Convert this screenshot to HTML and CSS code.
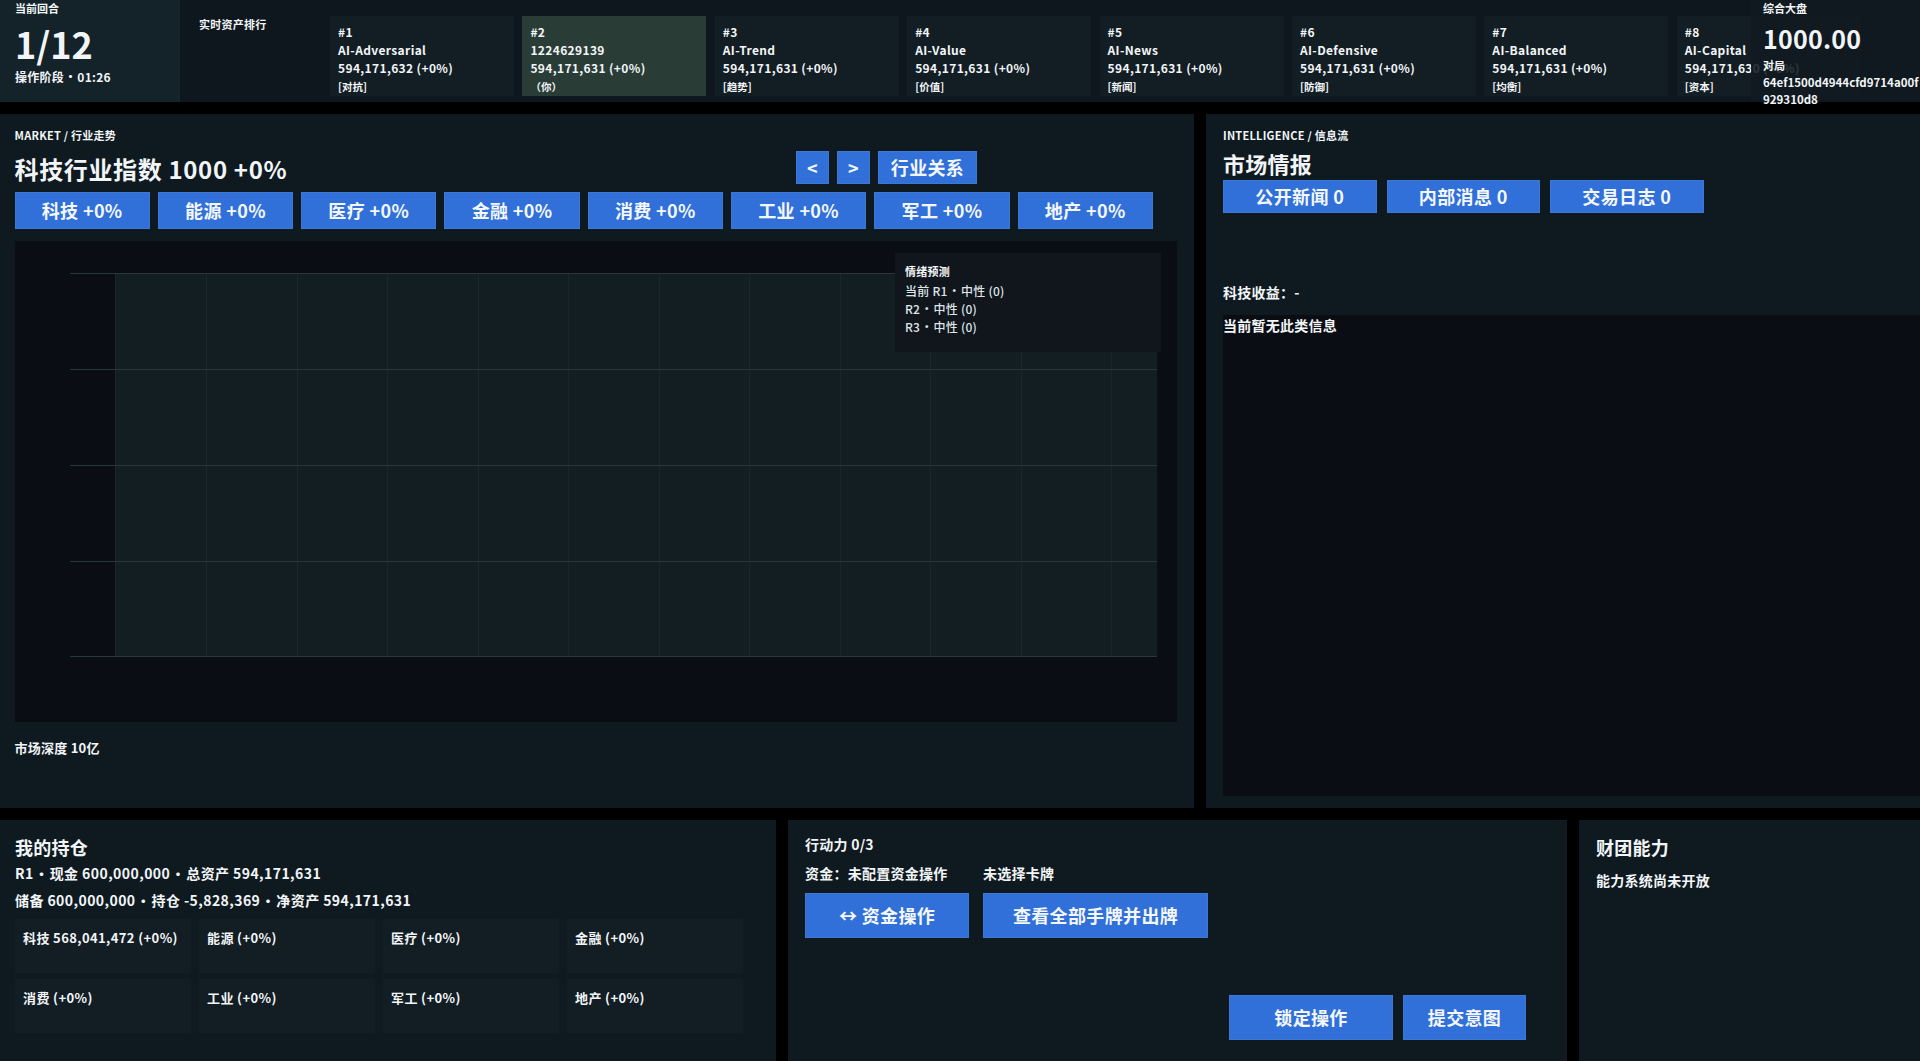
FILE: index.html
```html
<!DOCTYPE html>
<html lang="zh-CN">
<head>
<meta charset="utf-8">
<title>市场</title>
<link rel="stylesheet" href="styles.css">
</head>
<body>
<div class="app">
  <header class="topbar">
    <div class="round">
      <div class="label">当前回合</div>
      <div class="round-num">1/12</div>
      <div class="phase">操作阶段 <span class="dot">·</span> 01:26</div>
    </div>
    <div class="rank">
      <div class="rank-title">实时资产排行</div>
      <div class="rank-cards">
        <div class="card"><div>#1</div><div>AI-Adversarial</div><div>594,171,632 (+0%)</div><div class="tag">[对抗]</div></div>
        <div class="card me"><div>#2</div><div>1224629139</div><div>594,171,631 (+0%)</div><div class="tag">（你）</div></div>
        <div class="card"><div>#3</div><div>AI-Trend</div><div>594,171,631 (+0%)</div><div class="tag">[趋势]</div></div>
        <div class="card"><div>#4</div><div>AI-Value</div><div>594,171,631 (+0%)</div><div class="tag">[价值]</div></div>
        <div class="card"><div>#5</div><div>AI-News</div><div>594,171,631 (+0%)</div><div class="tag">[新闻]</div></div>
        <div class="card"><div>#6</div><div>AI-Defensive</div><div>594,171,631 (+0%)</div><div class="tag">[防御]</div></div>
        <div class="card"><div>#7</div><div>AI-Balanced</div><div>594,171,631 (+0%)</div><div class="tag">[均衡]</div></div>
        <div class="card"><div>#8</div><div>AI-Capital</div><div>594,171,630 (+0%)</div><div class="tag">[资本]</div></div>
      </div>
    </div>
    <div class="index">
      <div class="label">综合大盘</div>
      <div class="index-num">1000.00</div>
      <div class="match-label">对局</div>
      <div class="match">64ef1500d4944cfd9714a00f929310d8</div>
    </div>
  </header>

  <main class="middle">
    <section class="panel market">
      <div class="eyebrow">MARKET / 行业走势</div>
      <div class="market-head">
        <h2 class="market-title">科技行业指数 1000 +0%</h2>
        <div class="market-nav">
          <button class="btn nav">&lt;</button>
          <button class="btn nav">&gt;</button>
          <button class="btn rel">行业关系</button>
        </div>
      </div>
      <div class="sectors">
        <button class="btn sector">科技 +0%</button>
        <button class="btn sector">能源 +0%</button>
        <button class="btn sector">医疗 +0%</button>
        <button class="btn sector">金融 +0%</button>
        <button class="btn sector">消费 +0%</button>
        <button class="btn sector">工业 +0%</button>
        <button class="btn sector">军工 +0%</button>
        <button class="btn sector">地产 +0%</button>
      </div>
      <div class="chart">
        <svg class="chart-svg" width="1162" height="481" viewBox="0 0 1162 481">
          <rect x="100" y="32" width="1042" height="384" fill="#131e23"/>
          <g stroke="#1a262b" stroke-width="1">
            <path d="M100.500 32V416M191.500 32V416M282.500 32V416M372.500 32V416M463.500 32V416M553.500 32V416M644.500 32V416M734.500 32V416M825.500 32V416M915.500 32V416M1006.500 32V416M1096.500 32V416"/>
          </g>
          <g stroke="#2a363b" stroke-width="1">
            <path d="M55 32.500H1142M55 128.500H1142M55 224.500H1142M55 320.500H1142M55 415.500H1142"/>
          </g>
        </svg>
        <div class="forecast">
          <div class="forecast-title">情绪预测</div>
          <div>当前 R1 <span class="dot">·</span> 中性 (0)</div>
          <div>R2 <span class="dot">·</span> 中性 (0)</div>
          <div>R3 <span class="dot">·</span> 中性 (0)</div>
        </div>
      </div>
      <div class="depth">市场深度 10亿</div>
    </section>

    <section class="panel intel">
      <div class="eyebrow">INTELLIGENCE / 信息流</div>
      <h2 class="intel-title">市场情报</h2>
      <div class="tabs">
        <button class="btn tab">公开新闻 0</button>
        <button class="btn tab">内部消息 0</button>
        <button class="btn tab">交易日志 0</button>
      </div>
      <div class="yield">科技收益：-</div>
      <div class="feed">当前暂无此类信息</div>
    </section>
  </main>

  <footer class="bottom">
    <section class="panel holdings">
      <h3 class="panel-title">我的持仓</h3>
      <div class="stat">R1 <span class="dot">·</span> 现金 600,000,000 <span class="dot">·</span> 总资产 594,171,631</div>
      <div class="stat">储备 600,000,000 <span class="dot">·</span> 持仓 -5,828,369 <span class="dot">·</span> 净资产 594,171,631</div>
      <div class="hold-grid">
        <div class="hold">科技 568,041,472 (+0%)</div>
        <div class="hold">能源 (+0%)</div>
        <div class="hold">医疗 (+0%)</div>
        <div class="hold">金融 (+0%)</div>
        <div class="hold">消费 (+0%)</div>
        <div class="hold">工业 (+0%)</div>
        <div class="hold">军工 (+0%)</div>
        <div class="hold">地产 (+0%)</div>
      </div>
    </section>
    <section class="panel actions">
      <div class="ap">行动力 0/3</div>
      <div class="choice"><span class="choice-fund">资金：未配置资金操作</span><span>未选择卡牌</span></div>
      <div class="act-row">
        <button class="btn act fund">↔ 资金操作</button>
        <button class="btn act cards">查看全部手牌并出牌</button>
      </div>
      <div class="submit-row">
        <button class="btn act fund">锁定操作</button>
        <button class="btn act submit">提交意图</button>
      </div>
    </section>
    <section class="panel power">
      <h3 class="panel-title">财团能力</h3>
      <div class="power-note">能力系统尚未开放</div>
    </section>
  </footer>
</div>
</body>
</html>
```

FILE: styles.css
```css
* { box-sizing: border-box; }
html, body { margin: 0; padding: 0; height: 100%; background: #000; overflow: hidden; }
body {
  font-family: "Noto Sans CJK SC", "Noto Sans", sans-serif;
  font-weight: 700;
  color: #f2f5f7;
  font-size: 12px;
  letter-spacing: 0.02em;
}
.dot { margin: 0 -0.2em; }
.app { width: 1920px; height: 1061px; display: flex; flex-direction: column; gap: 12px; }

.topbar { height: 102px; flex: none; display: flex; background: #0e171e; position: relative; overflow: visible; }
.round { width: 180px; flex: none; padding: 0 15px; background: #14222a; border-right: 1px solid #18252c; }
.label { font-size: 11px; line-height: 16px; letter-spacing: 0; }
.phase { font-size: 12px; line-height: 18px; }
.round-num { font-size: 36px; line-height: 42px; margin-top: 6px; margin-bottom: 4px; letter-spacing: 0; }

.rank { flex: 1; min-width: 0; display: flex; padding: 16px 0 0 19px; overflow: hidden; }
.rank-title { width: 131px; flex: none; font-size: 11px; line-height: 16px; }
.rank-cards { display: flex; gap: 8.400px; }
.card { width: 184px; height: 80px; flex: none; background: #131d24; padding: 6.500px 8px 0; font-size: 12px; line-height: 18.400px; letter-spacing: 0.03em; }
.card.me { background: #2a3c36; }
.tag { font-size: 10.500px; line-height: 18px; letter-spacing: 0; }

.index { position: absolute; right: 0; top: 0; width: 169px; height: 102px; padding: 0 0 0 12px; background: rgba(16, 26, 32, 0.88); overflow: visible; }
.index-num { font-size: 25px; line-height: 34px; margin-top: 5px; margin-bottom: 1px; }
.match-label { font-size: 11px; line-height: 18px; letter-spacing: 0; }
.match { font-size: 11.500px; line-height: 17px; width: 157px; word-break: break-all; letter-spacing: 0; }

.middle { height: 694px; flex: none; display: flex; gap: 12px; }
.panel { background: #0f1a20; }
.market { width: 1194px; flex: none; padding: 13px 15px 0 14.500px; }
.eyebrow { font-size: 11px; line-height: 16px; letter-spacing: 0.25px; }
.market-head { height: 37px; margin-top: 8px; display: flex; align-items: flex-start; }
.market-title { margin: 0; width: 781.500px; font-size: 24px; line-height: 36px; font-weight: 700; letter-spacing: 0.65px; }
.market-nav { display: flex; gap: 8px; }

.btn {
  font: inherit;
  letter-spacing: 0.02em;
  color: #f4f7fa;
  background: #3070d8;
  border: 1px solid #3d78d4;
  padding: 0 0 2px;
  border-radius: 0;
}
.nav { width: 33px; height: 33px; font-size: 18px; }
.rel { width: 99px; height: 33px; font-size: 18px; }
.sectors { display: flex; gap: 8px; margin-top: 4px; }
.sector { width: 135.300px; height: 37px; font-size: 18px; }

.chart { position: relative; margin-top: 12px; width: 1162.500px; height: 481px; background: #0a0d14; }
.chart-svg { display: block; }
.forecast { position: absolute; left: 880.500px; top: 12px; width: 266px; height: 99px; background: #10161c; padding: 9px 10px; font-size: 12px; line-height: 18px; font-weight: 500; color: #dfe4e8; }
.forecast-title { font-weight: 700; color: #f2f5f7; line-height: 18px; margin-bottom: 2px; font-size: 11px; }
.depth { margin-top: 17px; font-size: 13px; line-height: 18px; }

.intel { flex: 1; min-width: 0; padding: 13px 15px 12px 17px; display: flex; flex-direction: column; }
.intel-title { margin: 5px 0 1px; font-size: 22px; line-height: 31px; font-weight: 700; }
.tabs { display: flex; gap: 10px; flex: none; }
.tab { width: 153.500px; height: 33px; font-size: 18px; }
.yield { margin-top: 70px; font-size: 14px; line-height: 18px; }
.feed { flex: 1; margin-top: 14px; margin-right: -15px; background: #0a0d14; font-size: 14px; line-height: 20px; }

.bottom { flex: 1; min-height: 0; display: flex; gap: 12px; }
.holdings { width: 776px; flex: none; padding: 15px 15px 0; }
.panel-title { margin: 0 0 1px; font-size: 18px; line-height: 24px; font-weight: 700; }
.stat { font-size: 14px; line-height: 26.500px; letter-spacing: 0.03em; }
.hold-grid { display: grid; grid-template-columns: repeat(4, 176px); grid-auto-rows: 54px; gap: 6px 8px; margin-top: 6px; }
.hold { background: #131d24; padding: 9.500px 8px; font-size: 13px; line-height: 18px; letter-spacing: 0.03em; }
.actions { width: 779px; flex: none; padding: 15px 0 0 17px; display: flex; flex-direction: column; }
.ap { font-size: 14px; line-height: 18px; }
.choice { margin-top: 11px; font-size: 14px; line-height: 18px; display: flex; }
.choice-fund { width: 178px; }
.act-row { display: flex; gap: 14px; margin-top: 11px; }
.act { height: 45px; font-size: 18px; }
.fund { width: 164px; }
.cards { width: 225px; }
.submit-row { display: flex; gap: 10px; justify-content: flex-end; margin-top: 57px; padding-right: 41px; }
.submit { width: 123px; }
.power { flex: 1; min-width: 0; padding: 15px 17px 0; }
.power-note { margin-top: 12px; font-size: 14px; line-height: 18px; }
```
